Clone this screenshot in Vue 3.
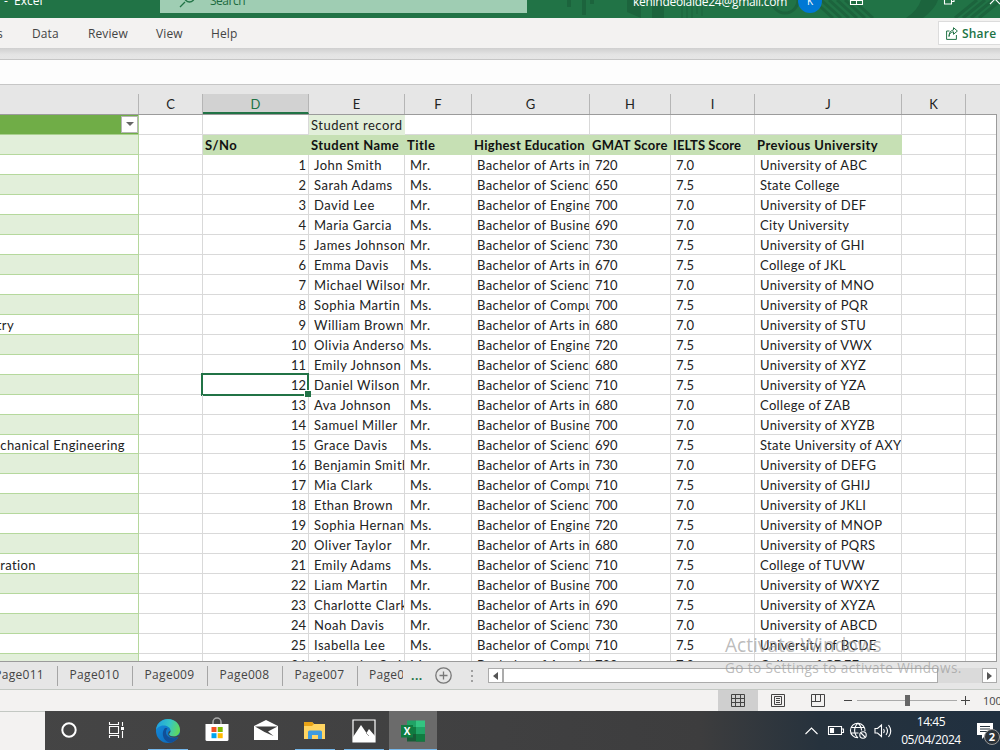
<template>
  <div class="window">
    <header class="title-bar">
      <span class="app-name">- &nbsp;Excel</span>
      <div class="search-box">
        <svg width="16" height="16" viewBox="0 0 16 16"><path d="M1 15L6 10M5.500 5a5 5 0 1 0 10 0a5 5 0 1 0-10 0" /></svg>
        <span>Search</span>
      </div>
      <svg class="title-art" width="473" height="18" viewBox="0 0 473 18">
        <path d="M42 0v7M57 0v15M65 0v4" stroke-width="4" />
        <path d="M100 0v12l14 6V0zM125 0v18h12V0z" class="block" />
        <path d="M155 0v18M160 0v18M165 0v18M170 0v14M175 0v16" stroke-width="1" />
        <path d="M245 0a12 12 0 0 0 26 0" stroke-width="3" />
        <path d="M286 0l20 18M294 0l20 18M302 0l20 18M310 0l20 18M318 0l20 18M326 0l20 18" stroke-width="3" />
        <path d="M394 0q-3 10-15 18h17q12-9 15-18z" class="block" />
        <path d="M428 18L450 0M436 18L458 0M444 18L466 0M452 18L473 1" stroke-width="3" />
      </svg>
      <span class="account">kehindeolaide24@gmail.com</span>
      <span class="avatar">K</span>
      <svg class="window-icons" width="160" height="18" viewBox="0 0 160 18">
        <path d="M10.500-4v8.500h12V-4M11 .5h11M16.500-2v6M104.500-4v8h7v-8M111.500 1.500h2.500V-5M150 4l5-5l5 5" />
      </svg>
    </header>

    <nav class="menu-bar">
      <span v-for="item in menu" :key="item.label" :class="['menu-item', item.cls]">{{ item.label }}</span>
      <button class="share">
        <svg width="12" height="13" viewBox="0 0 12 13"><path d="M3.500 4H.6v8.400h9.800V8M3 9.500c.3-3 2-4.500 4.500-4.700v2.500L11.400 4L7.500.7v2.200C4.500 3.300 3 6 3 9.500z" /></svg>
        Share
      </button>
    </nav>
    <div class="ribbon-shadow"></div>
    <div class="formula-bar"></div>

    <div class="col-heads grid-cols">
      <span v-for="(c, i) in columns" :key="i" :class="['col-head', { active: c === 'D' }]">{{ c }}</span>
    </div>

    <main class="sheet">
      <div class="grid-cols row">
        <div class="cell table-head"><span class="filter"></span></div>
        <div class="cell"></div>
        <div class="cell"></div>
        <div class="cell record"><span>Student record</span></div>
        <div v-for="n in 7" :key="n" class="cell"></div>
      </div>
      <div class="grid-cols row heading">
        <div class="cell left band"></div>
        <div class="cell"></div>
        <div v-for="h in headings" :key="h" :class="['cell', 'head', h.split(' ')[0].toLowerCase()]"><span>{{ h }}</span></div>
        <div class="cell"></div>
        <div class="cell"></div>
      </div>
      <div v-for="(s, i) in students" :key="i" class="grid-cols row">
        <div :class="['cell', 'left', { band: i % 2 === 1 }]"><span>{{ courses[i + 1] }}</span></div>
        <div class="cell"></div>
        <div :class="['cell', 'num', { selected: i === 11 }]"><span>{{ i + 1 }}</span></div>
        <div class="cell name"><span>{{ s[0] }}</span></div>
        <div class="cell"><span>{{ s[1] }}</span></div>
        <div class="cell"><span>Bachelor of {{ s[2] }}</span></div>
        <div class="cell score"><span>{{ s[3] }}</span></div>
        <div class="cell score"><span>{{ s[4] }}</span></div>
        <div class="cell university"><span>{{ s[5] }}</span></div>
        <div class="cell"></div>
        <div class="cell"></div>
      </div>
    </main>

    <footer class="tabs">
      <span v-for="t in tabs" :key="t" class="tab"><span>{{ t }}</span></span>
      <span class="tab last"><span>Page006</span></span>
      <span class="more">...</span>
      <svg class="add" width="17" height="17" viewBox="0 0 17 17"><circle cx="8.500" cy="8.500" r="7.700" /><path d="M8.500 4.500v8M4.500 8.500h8" /></svg>
      <span class="grip"><i></i><i></i><i></i></span>
      <div class="scroll">
        <span class="arrow"><svg width="5" height="8"><path d="M5 0v8L0 4z" /></svg></span>
        <span class="thumb"></span>
        <span class="track"></span>
        <span class="arrow"><svg width="5" height="8"><path d="M0 0v8l5-4z" /></svg></span>
      </div>
    </footer>

    <div class="status">
      <span class="view on"><svg width="14" height="14" viewBox="0 0 14 14"><path d="M.5.5h13v12H.5zM.5 4.500h13M.5 8.500h13M4.500.5v12M9.500.5v12" /></svg></span>
      <span class="view"><svg width="14" height="14" viewBox="0 0 14 14"><path d="M.5.5h13v12H.5zM3.500 2.500h7v8h-7zM5 4.500h4M5 6.500h4M5 8.500h4" /></svg></span>
      <span class="view"><svg width="14" height="14" viewBox="0 0 14 14"><path d="M.5.5h13v12H.5zM4.500.5V7.500M9.500.5V7.500M.5 7.500h9" /></svg></span>
      <span class="minus"></span>
      <span class="slider"><i></i></span>
      <svg class="plus" width="9" height="9"><path d="M4.500 0v9M0 4.500h9" /></svg>
      <span class="percent">100%</span>
    </div>

    <div class="taskbar">
      <div class="search-edge"></div>
      <div class="task cortana"><svg width="18" height="18" viewBox="0 0 18 18"><circle cx="9" cy="9" r="6.700" fill="none" stroke="#fff" stroke-width="2" /></svg></div>
      <div class="task views">
        <svg width="18" height="18" viewBox="0 0 18 18"><path d="M1.500 1v2.500h9V1M1.500 17v-2.500h9V17M1.500 5.500h9v7h-9zM14.500 1v4M14.500 10v7" fill="none" stroke="#fff" stroke-width="1.100" /><path d="M13 6h3v3h-3z" fill="#fff" /></svg>
      </div>
      <div class="task open">
        <svg width="26" height="26" viewBox="0 0 26 26">
          <defs>
            <linearGradient id="edgeTop" x1="0" y1=".3" x2="1" y2=".5"><stop offset="0" stop-color="#1f9fe0" /><stop offset=".55" stop-color="#36c6c4" /><stop offset="1" stop-color="#62d957" /></linearGradient>
            <linearGradient id="edgeLow" x1="0" y1="0" x2="1" y2="1"><stop offset="0" stop-color="#1590e0" /><stop offset="1" stop-color="#0b60b0" /></linearGradient>
          </defs>
          <circle cx="13" cy="13" r="12" fill="url(#edgeLow)" />
          <path d="M1 12C1.500 5 7 1 13 1c7 0 12 5 12 11 0 4-3 6.500-6.500 6.500-3 0-4.500-1.300-4.500-2.300 0-.8 1.500-1.400 1.500-3.700C15.500 9.500 12 7.500 8.500 7.500 4.500 7.500 2 10 1 12z" fill="url(#edgeTop)" />
          <path d="M9.500 10.500c-4 5.500-.5 13 5.500 14.200 4-.7 7-3 8.500-6-3.500 2.300-9 2-11.500-1.200-1.500-2-1.500-5 .5-7.200-1-.4-2.200-.3-3 .2z" fill="#114f98" />
          <path d="M15.500 12.500c0 2.300-1.500 2.900-1.500 3.700 0 1 1.500 2.300 4.500 2.300 2 0 3.500-.6 4.800-1.600l1.500 1.400c-3.500 2.200-9 1.900-10.900-.8-1.300-1.600-.8-4.200 1.600-5z" fill="#454545" />
        </svg>
      </div>
      <div class="task">
        <svg width="24" height="26" viewBox="0 0 24 26">
          <path d="M8 8V5a4 4 0 0 1 8 0v3" fill="none" stroke="#aaa" stroke-width="1.500" />
          <path d="M.5 7h23v15.500q0 1.500-1.500 1.500H2Q.5 24 .5 22.500z" fill="#fff" />
          <path d="M6.500 10h5v5h-5z" fill="#f25022" /><path d="M12.700 10h5v5h-5z" fill="#7fba00" /><path d="M6.500 16.200h5v5h-5z" fill="#00a4ef" /><path d="M12.700 16.200h5v5h-5z" fill="#ffb900" />
        </svg>
      </div>
      <div class="task">
        <svg width="26" height="22" viewBox="0 0 26 22"><path d="M1 7L13 1l12 6v14H1z" fill="#fff" /><path d="M2 7.500h22.500L15 12.500l5.500 4.500L11.500 13z" fill="#3f3f3f" /></svg>
      </div>
      <div class="task open">
        <svg width="24" height="22" viewBox="0 0 24 22">
          <path d="M1 2h8l2 2h11v15H1z" fill="#ffd562" /><path d="M1 2h8l2 2-2 2H1z" fill="#e8a317" />
          <path d="M5 19v-7q0-1.500 1.500-1.500h11Q19 10.500 19 12v7h-4v-4H9v4z" fill="#3e9be0" /><path d="M9 15h6v2H9z" fill="#ffd562" />
        </svg>
      </div>
      <div class="task open">
        <svg width="24" height="24" viewBox="0 0 24 24"><path d="M1 1h22v22H1z" fill="#3c3c3c" stroke="#fff" stroke-width="1.200" /><path d="M1 18l8-12 5.500 8 2.500-4 6 7v6H1z" fill="#fff" /><path d="M14 14l3 3" fill="none" stroke="#888" stroke-width=".8" /></svg>
      </div>
      <div class="task open active">
        <svg width="26" height="24" viewBox="0 0 26 24">
          <path d="M7 1.500h9V9H7z" fill="#21a366" /><path d="M16 1.500h9V9h-9z" fill="#33c481" />
          <path d="M7 8h9v7H7z" fill="#107c41" /><path d="M16 8h9v7h-9z" fill="#21a366" />
          <path d="M7 15h18v7.500H7z" fill="#185c37" /><path d="M16 15h9v7.500h-9z" fill="#107c41" />
          <path d="M1 6h12v12.500H1z" fill="#107c41" />
          <text x="7" y="16" text-anchor="middle">X</text>
        </svg>
      </div>
      <div class="tray">
        <svg width="88" height="20" viewBox="0 0 88 20">
          <path d="M1.500 13l6-6 6 6" />
          <path d="M24.500 5.500h13v8h-13zM38 8h1.500v3.500H38" /><path d="M26.500 7.500h3v4h-3z" class="solid" />
          <path d="M54 16.800a7.300 7.300 0 1 1 7-6.500M54 2.200c-4.500 4-4.500 10.500 0 14.600M54 2.200c2.500 2 3.400 4.500 3.600 7.300M47.500 6.500h13M47 12h7.500" />
          <circle cx="59" cy="14" r="3.200" /><path d="M57 12l4 4" />
          <path d="M71 7.500h2.500L77.500 4v11.500l-4-3.500H71zM79.500 8q1.500 2 0 4M82 6q3 4 0 8M84.500 4q4.500 6 0 12" />
        </svg>
      </div>
      <div class="clock"><span>14:45</span><span>05/04/2024</span></div>
      <div class="notice">
        <svg width="17" height="17" viewBox="0 0 17 17"><path d="M0 0h16v12H9l-4 4v-4H0z" fill="#fff" /><path d="M3 3.500h10M3 6h10M3 8.500h7" stroke="#26343f" /></svg>
        <span class="badge">2</span>
      </div>
    </div>

    <div class="watermark"><p class="big">Activate Windows</p><p class="small">Go to Settings to activate Windows.</p></div>
  </div>
</template>

<script setup>
const menu = [
  { label: 's', cls: 'm-formulas' },
  { label: 'Data', cls: 'm-data' },
  { label: 'Review', cls: 'm-review' },
  { label: 'View', cls: 'm-view' },
  { label: 'Help', cls: 'm-help' }
]

const columns = ['', 'C', 'D', 'E', 'F', 'G', 'H', 'I', 'J', 'K', '']
const headings = ['S/No', 'Student Name', 'Title', 'Highest Education', 'GMAT Score', 'IELTS Score', 'Previous University']
const tabs = ['Page011', 'Page010', 'Page009', 'Page008', 'Page007']

// sheet row number -> course shown in the left table
const courses = { 9: 'Chemistry', 15: 'Mechanical Engineering', 21: 'Business Administration' }

const students = [
  ['John Smith', 'Mr.', 'Arts in', '720', '7.0', 'University of ABC'],
  ['Sarah Adams', 'Ms.', 'Science', '650', '7.5', 'State College'],
  ['David Lee', 'Mr.', 'Engineering', '700', '7.0', 'University of DEF'],
  ['Maria Garcia', 'Ms.', 'Business', '690', '7.0', 'City University'],
  ['James Johnson', 'Mr.', 'Science', '730', '7.5', 'University of GHI'],
  ['Emma Davis', 'Ms.', 'Arts in', '670', '7.5', 'College of JKL'],
  ['Michael Wilson', 'Mr.', 'Science', '710', '7.0', 'University of MNO'],
  ['Sophia Martin', 'Ms.', 'Computer', '700', '7.5', 'University of PQR'],
  ['William Brown', 'Mr.', 'Arts in', '680', '7.0', 'University of STU'],
  ['Olivia Anderson', 'Ms.', 'Engineering', '720', '7.5', 'University of VWX'],
  ['Emily Johnson', 'Ms.', 'Science', '680', '7.5', 'University of XYZ'],
  ['Daniel Wilson', 'Mr.', 'Science', '710', '7.5', 'University of YZA'],
  ['Ava Johnson', 'Ms.', 'Arts in', '680', '7.0', 'College of ZAB'],
  ['Samuel Miller', 'Mr.', 'Business', '700', '7.0', 'University of XYZB'],
  ['Grace Davis', 'Ms.', 'Science', '690', '7.5', 'State University of AXY'],
  ['Benjamin Smith', 'Mr.', 'Arts in', '730', '7.0', 'University of DEFG'],
  ['Mia Clark', 'Ms.', 'Computer', '710', '7.5', 'University of GHIJ'],
  ['Ethan Brown', 'Mr.', 'Science', '700', '7.0', 'University of JKLI'],
  ['Sophia Hernandez', 'Ms.', 'Engineering', '720', '7.5', 'University of MNOP'],
  ['Oliver Taylor', 'Mr.', 'Arts in', '680', '7.0', 'University of PQRS'],
  ['Emily Adams', 'Ms.', 'Science', '710', '7.5', 'College of TUVW'],
  ['Liam Martin', 'Mr.', 'Business', '700', '7.0', 'University of WXYZ'],
  ['Charlotte Clark', 'Ms.', 'Arts in', '690', '7.5', 'University of XYZA'],
  ['Noah Davis', 'Mr.', 'Science', '730', '7.0', 'University of ABCD'],
  ['Isabella Lee', 'Ms.', 'Computer', '710', '7.5', 'University of BCDE'],
  ['Alexander Smith', 'Mr.', 'Arts in', '720', '7.0', 'College of CDEF']
]
</script>

<style>
body {
  background: #e6e6e6;
}
</style>

<style scoped>
.window {
  position: relative;
  width: 1000px;
  height: 750px;
  overflow: hidden;
  display: flex;
  flex-direction: column;
  background: #e6e6e6;
  font-family: "Open Sans", "Noto Sans", sans-serif;
  font-size: 12px;
  color: #444;
}
.window * {
  box-sizing: border-box;
}
.window > * {
  flex-shrink: 0;
}
svg {
  display: block;
  flex-shrink: 0;
}

.title-bar {
  position: relative;
  display: flex;
  height: 18px;
  overflow: hidden;
  background: #217346;
  color: #fff;
  line-height: 18px;
}
.app-name {
  width: 160px;
  padding-left: 4px;
  margin-top: -8px;
}
.search-box {
  display: flex;
  width: 367px;
  height: 13px;
  padding-left: 19px;
  background: #9fcdb3;
  color: #1c6b40;
}
.search-box svg {
  margin-top: -8px;
  fill: none;
  stroke: #217346;
  stroke-width: 1.3;
}
.search-box span {
  margin: -8px 0 0 15px;
  letter-spacing: -0.5px;
}
.title-art {
  position: absolute;
  left: 527px;
  top: 0;
  fill: none;
  stroke: #1c643d;
}
.title-art .block {
  fill: #1c643d;
  stroke: none;
}
.account {
  position: relative;
  width: 165px;
  margin: -7px 0 0 106px;
  letter-spacing: -0.28px;
}
.avatar {
  position: relative;
  width: 24px;
  height: 24px;
  margin-top: -11px;
  border-radius: 50%;
  background: #0078d4;
  text-align: center;
  font-size: 10px;
  line-height: 25px;
}
.window-icons {
  position: relative;
  margin-left: 18px;
  fill: none;
  stroke: #fff;
  stroke-width: 1.1;
}

.menu-bar {
  display: flex;
  align-items: center;
  height: 30px;
  background: #f3f2f1;
}
.menu-item {
  letter-spacing: 0.1px;
}
.m-formulas { width: 32px; text-indent: -3px; }
.m-data { width: 56px; }
.m-review { width: 68px; }
.m-view { width: 55px; }
.share {
  display: flex;
  align-items: center;
  gap: 4px;
  width: 70px;
  height: 24px;
  margin: 0 -8px 0 auto;
  padding: 0 0 0 7px;
  border: 1px solid #dcdcdc;
  background: #fff;
  color: #217346;
  font: 600 12px "Open Sans", sans-serif;
  letter-spacing: 0.2px;
}
.share svg {
  fill: none;
  stroke: #217346;
}
.ribbon-shadow {
  height: 11px;
  background: linear-gradient(#cfcfcf, #e4e4e4 60%, #e6e6e6);
}
.formula-bar {
  height: 26px;
  border-top: 1px solid #c6c6c6;
  border-bottom: 1px solid #c6c6c6;
  background: #fdfdfd;
}

.grid-cols {
  display: grid;
  grid-template-columns: 139px 64px 106px 96px 67px 118px 81px 84px 147px 64px 30px;
}
.col-heads {
  height: 30px;
  padding-top: 9px;
  width: 997px;
  border-bottom: 1px solid #9b9b9b;
}
.col-head {
  height: 20px;
  border-right: 1px solid #b5b5b5;
  text-align: center;
  line-height: 20px;
  font-family: Lato, sans-serif;
  font-size: 13px;
  color: #222;
}
.col-head:last-child {
  border: none;
}
.col-head.active {
  background: #d2d2d2;
  border-bottom: 2px solid #217346;
  color: #217346;
}

.sheet {
  width: 997px;
  height: 547px;
  overflow: hidden;
  background: #fff;
  border-right: 1px solid #9b9b9b;
  border-bottom: 1px solid #9b9b9b;
  font-family: Lato, sans-serif;
  font-size: 13px;
  letter-spacing: 0.4px;
  color: #222;
}
.row {
  height: 19.98px;
}
.cell {
  position: relative;
  display: flex;
  align-items: center;
  min-width: 0;
  padding: 2px 0 0 5px;
  overflow: hidden;
  border-right: 1px solid #d9d9d9;
  border-bottom: 1px solid #d9d9d9;
  white-space: nowrap;
}
.cell:last-child {
  border-right: none;
}
.table-head {
  justify-content: flex-end;
  padding-top: 0;
  background: #70ad47;
  border-color: #a9d08e;
}
.filter {
  display: flex;
  align-items: center;
  justify-content: center;
  width: 17px;
  height: 17px;
  background: #fff;
  border: 1px solid #b5b5b5;
}
.filter::after {
  content: "";
  border: 4px solid transparent;
  border-top: 4px solid #666;
  border-bottom: none;
}
.record {
  padding-left: 2px;
  background: #e2efda;
  border-color: #e2efda;
  letter-spacing: 0.5px;
}
.name {
  letter-spacing: 0.48px;
}
.university {
  letter-spacing: 0.35px;
}
.left {
  justify-content: flex-end;
  padding-right: 13px;
  border-color: #b5d89c;
}
.row:nth-child(11) .left { padding-right: 124px; }
.row:nth-child(23) .left { padding-right: 102px; }
.left.band {
  background: #e2efda;
}
.head {
  padding-left: 2px;
  background: #c6e0b4;
  border-color: #c6e0b4;
  font-weight: 700;
  letter-spacing: 0.45px;
  color: #111;
}
.head.highest,
.head.gmat {
  letter-spacing: 0.3px;
}
.head.ielts {
  letter-spacing: 0.05px;
}
.num {
  justify-content: flex-end;
  padding-right: 2px;
  letter-spacing: 0;
}
.score {
  letter-spacing: -0.1px;
}
.selected {
  overflow: visible;
}
.selected::before {
  content: "";
  position: absolute;
  inset: -2px -1px -2px -2px;
  border: 2px solid #217346;
}
.selected::after {
  content: "";
  position: absolute;
  right: -3px;
  bottom: -3px;
  z-index: 1;
  width: 6px;
  height: 6px;
  border: 1px solid #fff;
  border-width: 1px 0 0 1px;
  background: #217346;
}

.tabs {
  display: flex;
  align-items: center;
  height: 28px;
  border-bottom: 1px solid #c3c8c3;
}
.tab {
  display: flex;
  align-items: center;
  justify-content: center;
  width: 75px;
  height: 20px;
  padding-bottom: 2px;
  border-right: 1px solid #a5a5a5;
  letter-spacing: 0.3px;
}
.tab > span {
  margin-left: -1px;
}
.tab:first-child {
  width: 58px;
  justify-content: flex-end;
  padding-right: 13px;
}
.tab.last {
  justify-content: flex-start;
  width: 45px;
  padding-left: 12px;
  overflow: hidden;
  border: none;
}
.more {
  width: 20px;
  margin-left: 8px;
  font-weight: 700;
  color: #217346;
  letter-spacing: 0.5px;
}
.add {
  margin-left: 4px;
  fill: none;
  stroke: #777;
  stroke-width: 1.3;
}
.grip {
  display: flex;
  flex-direction: column;
  gap: 3px;
  width: 36px;
  padding-left: 19px;
}
.grip i {
  width: 2px;
  height: 2px;
  background: #a0a0a0;
}
.scroll {
  display: flex;
  width: 509px;
  height: 15px;
}
.arrow {
  display: flex;
  align-items: center;
  justify-content: center;
  width: 15px;
  border: 1px solid #ababab;
  background: #fff;
  fill: #555;
}
.thumb {
  width: 435px;
  border: 1px solid #ababab;
  background: #fff;
}
.track {
  flex: 1;
  background: #dadada;
}

.status {
  display: flex;
  align-items: center;
  height: 21px;
  padding-left: 718px;
  background: #f3f2f1;
  white-space: nowrap;
}
.status > * {
  flex-shrink: 0;
}
.view {
  display: flex;
  align-items: center;
  justify-content: center;
  width: 40px;
  height: 21px;
}
.view.on {
  background: #cfcfcf;
}
.view svg,
.plus {
  fill: none;
  stroke: #444;
}
.minus {
  width: 8px;
  height: 1px;
  margin-left: 6px;
  background: #444;
}
.slider {
  display: flex;
  align-items: center;
  justify-content: center;
  width: 100px;
  height: 1px;
  margin: 0 4px 0 5px;
  background: #aaa;
}
.slider i {
  width: 5px;
  height: 11px;
  background: #666;
}
.percent {
  margin-left: 13px;
  font-size: 11px;
}

.taskbar {
  display: flex;
  height: 39px;
  background: linear-gradient(90deg, #454545 0%, #404041 50%, #3d3d3e 70%, #26323d 82%, #203040 100%);
  color: #fff;
}
.search-edge {
  width: 45px;
  border-top: 1px solid #c3c8c3;
  background: #f3f2f1;
}
.task {
  display: flex;
  align-items: center;
  justify-content: center;
  width: 49px;
  border-bottom: 1px solid transparent;
}
.task.cortana {
  width: 48px;
}
.task.views {
  width: 50px;
  padding-right: 2px;
}
.task.open {
  border: none;
  background: linear-gradient(#76b9ed, #76b9ed) center bottom / 40px 1px no-repeat;
}
.task.active {
  width: 48px;
  margin-left: 1px;
  background: linear-gradient(#76b9ed, #76b9ed) center bottom / 48px 1px no-repeat, #6b6b6b;
}
.task text {
  fill: #fff;
  font: 700 10px "Open Sans", sans-serif;
}
.tray {
  margin-left: auto;
  padding-top: 10px;
}
.tray svg {
  fill: none;
  stroke: #fff;
  stroke-width: 1.1;
}
.tray .solid {
  fill: #fff;
}
.clock {
  display: flex;
  flex-direction: column;
  width: 77px;
  padding: 2px 0 0 1px;
  text-align: center;
  line-height: 18px;
  letter-spacing: -0.4px;
}
.notice {
  position: relative;
  width: 31px;
  padding: 12px 0 0 8px;
}
.badge {
  position: absolute;
  left: 15px;
  top: 18px;
  width: 16px;
  height: 16px;
  border: 1px solid #999;
  border-radius: 50%;
  background: #2b3238;
  text-align: center;
  font-size: 11px;
  font-weight: 700;
  line-height: 14px;
}

.watermark {
  position: absolute;
  left: 725px;
  top: 633px;
  color: rgba(150, 150, 150, 0.65);
  white-space: nowrap;
}
.watermark p {
  margin: 0;
}
.big {
  font-size: 19.100px;
  line-height: 24px;
}
.small {
  font-size: 13.600px;
  letter-spacing: 0.4px;
  line-height: 21px;
}
</style>
